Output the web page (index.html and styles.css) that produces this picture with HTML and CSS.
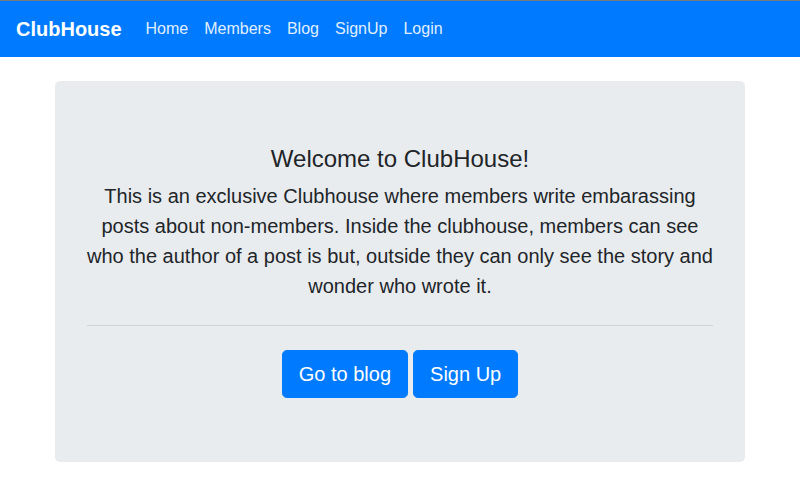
FILE: index.html
```html
<!DOCTYPE html>
<html lang="en">
<head>
<meta charset="utf-8">
<title>ClubHouse</title>
<link rel="stylesheet" href="styles.css">
</head>
<body>
<nav class="navbar">
  <a class="brand" href="#">ClubHouse</a>
  <ul class="nav">
    <li><a class="nav-link" href="#">Home</a></li>
    <li><a class="nav-link" href="#">Members</a></li>
    <li><a class="nav-link" href="#">Blog</a></li>
    <li><a class="nav-link" href="#">SignUp</a></li>
    <li><a class="nav-link" href="#">Login</a></li>
  </ul>
</nav>
<main class="container">
  <section class="jumbotron">
    <h4 class="title">Welcome to ClubHouse!</h4>
    <p class="lead">This is an exclusive Clubhouse where members write embarassing posts about non-members. Inside the clubhouse, members can see who the author of a post is but, outside they can only see the story and wonder who wrote it.</p>
    <hr class="divider">
    <div class="actions">
      <a class="btn" href="#">Go to blog</a>
      <a class="btn" href="#">Sign Up</a>
    </div>
  </section>
</main>
</body>
</html>
```
FILE: styles.css
```css
* { box-sizing: border-box; }
html, body { margin: 0; padding: 0; }
body {
  font-family: "Liberation Sans", Arial, sans-serif;
  font-size: 16px;
  line-height: 1.5;
  color: #212529;
  background: #fff;
  border-top: 1px solid #7a7a7a;
}
a { text-decoration: none; }
.navbar {
  display: flex;
  align-items: center;
  background: #007bff;
  padding: 8px 16px;
  height: 56px;
}
.brand {
  font-size: 20px;
  font-weight: 700;
  line-height: 30px;
  padding: 5px 0;
  margin-right: 16px;
  color: #fff;
}
.nav {
  display: flex;
  list-style: none;
  margin: 0;
  padding: 0;
}
.nav-link {
  display: block;
  padding: 8px;
  color: rgba(255,255,255,0.9);
  line-height: 24px;
}
.container {
  max-width: 720px;
  margin: 0 auto;
  padding: 0 15px;
}
.jumbotron {
  margin-top: 24px;
  background: #e9ecef;
  border-radius: 4.8px;
  padding: 64px 32px;
  text-align: center;
}
.title {
  margin: 0 0 7px;
  font-size: 24px;
  font-weight: 500;
  line-height: 1.2;
}
.lead {
  margin: 0 0 16px;
  font-size: 20px;
  font-weight: 300;
  line-height: 1.5;
}
.divider {
  margin: 24px 0;
  border: 0;
  border-top: 1px solid rgba(0,0,0,0.1);
  height: 0;
}
.actions {
  display: flex;
  justify-content: center;
  gap: 5px;
}
.btn {
  display: inline-block;
  background: #007bff;
  color: #fff;
  border: 1px solid #007bff;
  border-radius: 4.8px;
  padding: 8px 16px;
  font-size: 20px;
  line-height: 30px;
}
```
